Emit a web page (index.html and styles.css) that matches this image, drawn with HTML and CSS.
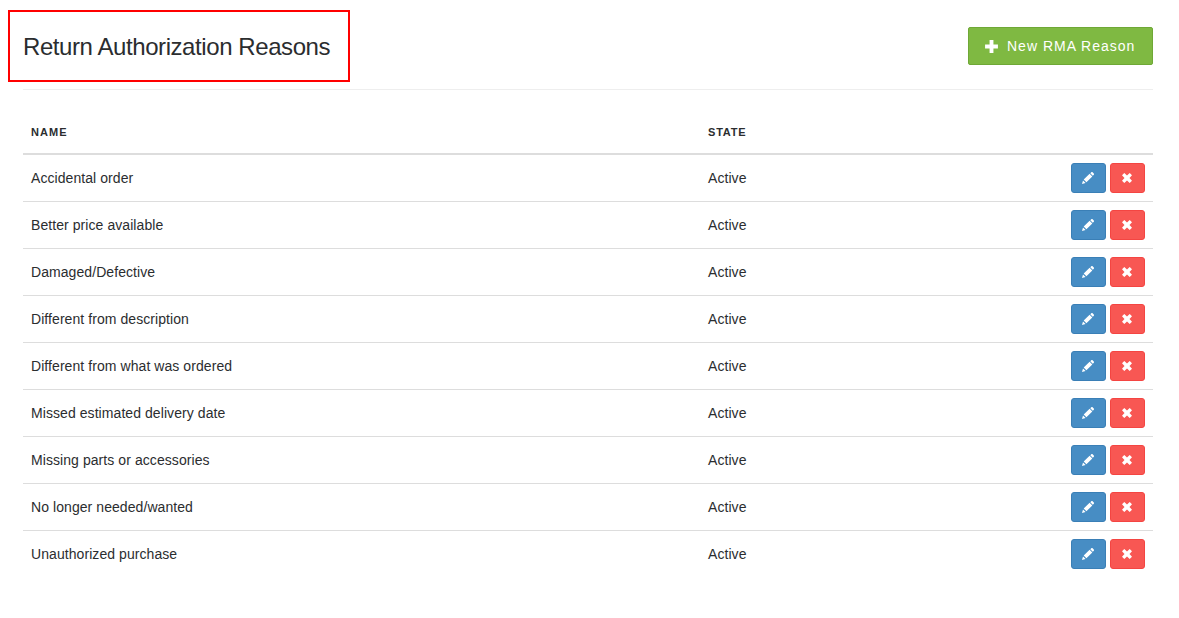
FILE: index.html
```html
<!DOCTYPE html>
<html lang="en">
<head>
    <meta charset="UTF-8">
    <meta name="viewport" content="width=device-width, initial-scale=1.0">
    <title>Return Authorization Reasons</title>
    <link rel="stylesheet" href="styles.css">
</head>

<body>

    <svg class="sprite">
        <symbol id="pencil" viewBox="0 0 14 14">
            <path d="M1 13l1-3.6L4.6 12zM2.7 8.6l5.9-5.9 2.7 2.7-5.9 5.9zM9.3 2.2l1-1c.4-.4.9-.4 1.3 0l1.2 1.2c.4.4.4.9 0 1.3l-1 1z"/>
        </symbol>
        <symbol id="remove" viewBox="0 0 12 12">
            <path d="M3.3 1L6 3.5 8.7 1 11 3.3 8.5 6 11 8.7 8.7 11 6 8.5 3.3 11 1 8.7 3.5 6 1 3.3z"/>
        </symbol>
    </svg>

    <header class="page-header">
        <div class="title-box">
            <h1>Return Authorization Reasons</h1>
        </div>
        <a class="btn-new" href="#">
            <svg class="plus" viewBox="0 0 14 14"><path d="M5.2 1h3.6v4.2H13v3.6H8.8V13H5.2V8.8H1V5.2h4.2z"/></svg>
            <span>New RMA Reason</span>
        </a>
    </header>

    <table>
        <thead>
            <tr>
                <th class="name">Name</th>
                <th class="state">State</th>
                <th class="actions"></th>
            </tr>
        </thead>
        <tbody id="reasons"></tbody>
    </table>

    <script>
        const reasons = [
            "Accidental order",
            "Better price available",
            "Damaged/Defective",
            "Different from description",
            "Different from what was ordered",
            "Missed estimated delivery date",
            "Missing parts or accessories",
            "No longer needed/wanted",
            "Unauthorized purchase"
        ];
        let rows = "";
        reasons.forEach(reason => {
            rows += `<tr>
                <td>${reason}</td>
                <td>Active</td>
                <td>
                    <div class="buttons">
                        <a class="btn edit" href="#"><svg><use href="#pencil"/></svg></a>
                        <a class="btn delete" href="#"><svg><use href="#remove"/></svg></a>
                    </div>
                </td>
            </tr>`;
        });
        document.getElementById("reasons").innerHTML = rows;
    </script>

</body>
</html>
```
FILE: styles.css
```css
body {
    margin: 0;
    padding: 10px 26px 0 23px;
    background-color: white;
    color: #2b2d2f;
    font-family: "Liberation Sans", Arial, sans-serif;
    font-size: 14px;
}

.sprite {
    display: none;
}

/* Page heading and the "new" button */
.page-header {
    display: flex;
    justify-content: space-between;
    align-items: flex-start;
    height: 79px;
    border-bottom: 1px solid #eee;
}

.title-box {
    box-sizing: border-box;
    width: 342px;
    height: 72px;
    margin-left: -15px;
    padding-left: 13px;
    border: 2px solid #ff0000;
}

h1 {
    margin: 0;
    font-size: 24px;
    font-weight: normal;
    letter-spacing: -0.42px;
    line-height: 70px;
    white-space: nowrap;
}

.btn-new {
    display: flex;
    align-items: center;
    box-sizing: border-box;
    width: 185px;
    height: 38px;
    margin-top: 17px;
    padding-left: 15px;
    border: 1px solid #6fa836;
    border-radius: 2px;
    background-color: #7fb942;
    color: white;
    letter-spacing: 1px;
    text-decoration: none;
    white-space: nowrap;
}

.plus {
    width: 15px;
    height: 15px;
    margin-right: 8px;
    fill: white;
}

/* Reasons table */
table {
    width: 100%;
    margin-top: 20px;
    border-spacing: 0;
    table-layout: fixed;
}

th {
    height: 43px;
    padding: 0 8px;
    border-bottom: 2px solid #ddd;
    font-size: 11px;
    letter-spacing: 1.1px;
    text-align: left;
    text-transform: uppercase;
}

th.name {
    width: 661px;
}

th.state {
    letter-spacing: 0.8px;
}

th.actions {
    width: 84px;
}

td {
    height: 30px;
    padding: 8px;
    border-top: 1px solid #ddd;
    letter-spacing: 0.07px;
    white-space: nowrap;
}

tbody tr:first-child td {
    border-top: none;
}

.buttons {
    display: flex;
    justify-content: flex-end;
    gap: 4px;
}

.btn {
    display: flex;
    align-items: center;
    justify-content: center;
    box-sizing: border-box;
    width: 35px;
    height: 30px;
    padding-right: 1px;
    border: 1px solid;
    border-radius: 3px;
}

.btn svg {
    width: 12px;
    height: 12px;
    fill: white;
}

.edit {
    background-color: #478dc4;
    border-color: #3a7fb6;
}

.edit svg {
    width: 14px;
    height: 14px;
}

.delete {
    background-color: #f85753;
    border-color: #f44542;
}
```
